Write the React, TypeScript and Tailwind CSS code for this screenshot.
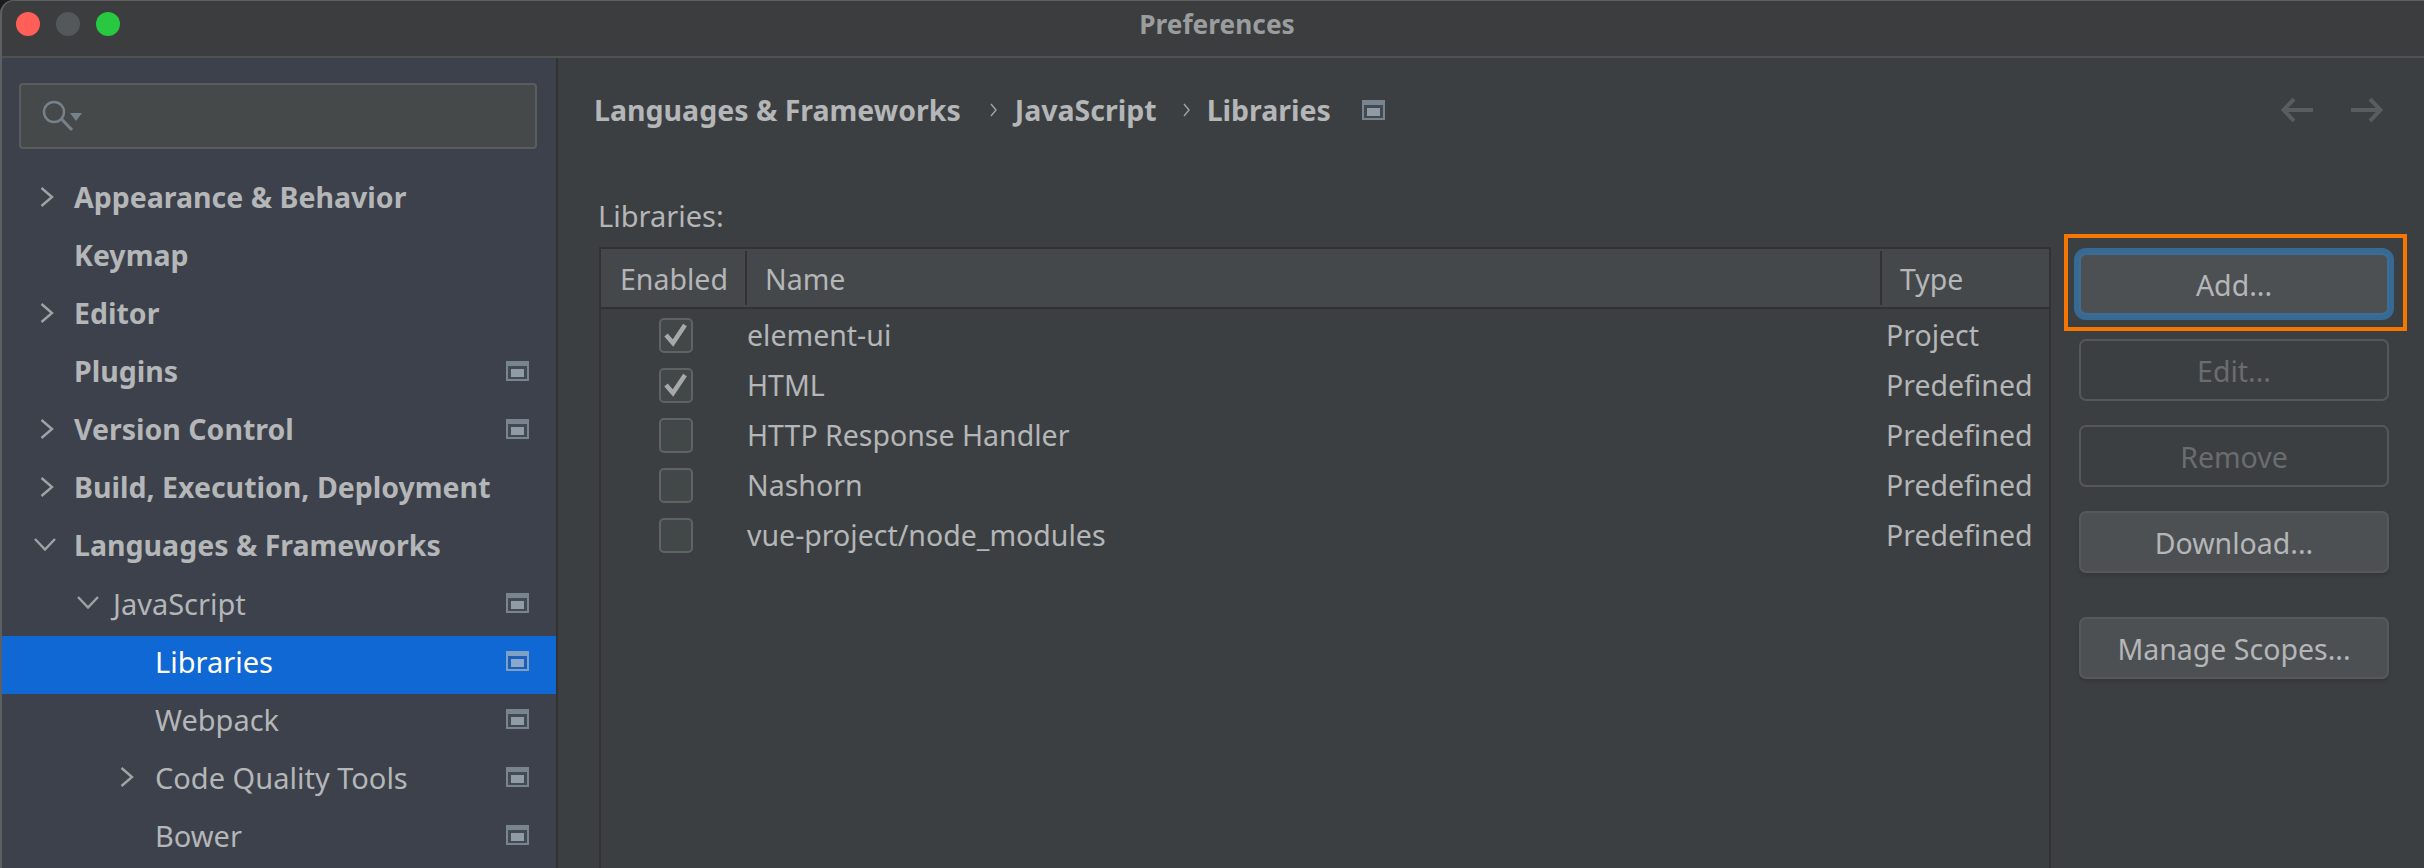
const font = "font-['Noto_Sans','Liberation_Sans',sans-serif]";

interface NavItem {
  label: string;
  indent: "top" | "mid" | "leaf";
  bold?: boolean;
  arrow?: "right" | "down";
  settings?: boolean;
  selected?: boolean;
}

const navItems: NavItem[] = [
  { label: "Appearance & Behavior", indent: "top", bold: true, arrow: "right" },
  { label: "Keymap", indent: "top", bold: true },
  { label: "Editor", indent: "top", bold: true, arrow: "right" },
  { label: "Plugins", indent: "top", bold: true, settings: true },
  { label: "Version Control", indent: "top", bold: true, arrow: "right", settings: true },
  { label: "Build, Execution, Deployment", indent: "top", bold: true, arrow: "right" },
  { label: "Languages & Frameworks", indent: "top", bold: true, arrow: "down" },
  { label: "JavaScript", indent: "mid", arrow: "down", settings: true },
  { label: "Libraries", indent: "leaf", settings: true, selected: true },
  { label: "Webpack", indent: "leaf", settings: true },
  { label: "Code Quality Tools", indent: "leaf", arrow: "right", settings: true },
  { label: "Bower", indent: "leaf", settings: true },
];

const libraries = [
  { name: "element-ui", type: "Project", enabled: true },
  { name: "HTML", type: "Predefined", enabled: true },
  { name: "HTTP Response Handler", type: "Predefined", enabled: false },
  { name: "Nashorn", type: "Predefined", enabled: false },
  { name: "vue-project/node_modules", type: "Predefined", enabled: false },
];

function SettingsIcon({ selected }: { selected?: boolean }) {
  return (
    <svg width="23" height="20" viewBox="0 0 23 20" className="shrink-0">
      <rect x="0" y="0" width="23" height="20" fill={selected ? "#7f9fc4" : "#78848e"} />
      <rect x="2" y="5" width="19" height="13" fill={selected ? "#1a5fb8" : "#434a54"} />
      <rect x="5" y="8" width="13" height="8" fill={selected ? "#8aa8cc" : "#8f9ba5"} />
    </svg>
  );
}

function SideRow({ item }: { item: NavItem }) {
  const padding =
    item.indent === "top" ? "pl-[74px]" : item.indent === "mid" ? "pl-[113px]" : "pl-[155px]";
  const rightPos =
    item.indent === "top" ? "left-[40px]" : item.indent === "mid" ? "left-[80px]" : "left-[120px]";
  const downPos =
    item.indent === "top" ? "left-[34px]" : item.indent === "mid" ? "left-[77px]" : "left-[114px]";
  return (
    <div
      className={`relative flex h-[58px] items-center justify-between pr-[27px] pb-[9px] ${padding} ${
        item.selected ? "bg-[#1068d4] text-white" : "text-[#b4b6b8]"
      }`}
    >
      {item.arrow === "right" && (
        <svg
          width="14"
          height="20"
          viewBox="0 0 14 20"
          fill="none"
          stroke="#a0a3a6"
          strokeWidth="2.4"
          className={`absolute top-[15px] ${rightPos}`}
        >
          <path d="M1.5 1 L12 10 L1.5 19" />
        </svg>
      )}
      {item.arrow === "down" && (
        <svg
          width="22"
          height="13"
          viewBox="0 0 22 13"
          fill="none"
          stroke="#a0a3a6"
          strokeWidth="2.4"
          className={`absolute top-[18px] ${downPos}`}
        >
          <path d="M1 1 L11 11.5 L21 1" />
        </svg>
      )}
      <span className={`pt-[2px] leading-none ${item.bold ? "text-[28.5px] font-bold" : "text-[29px] font-normal"}`}>
        {item.label}
      </span>
      {item.settings && <SettingsIcon selected={item.selected} />}
    </div>
  );
}

function Sidebar() {
  return (
    <aside className="flex w-[558px] shrink-0 flex-col border-r-2 border-[#323232] bg-[#3c414b]">
      <div className="pt-[25px] pr-[19px] pb-[23px] pl-[19px]">
        <div className="flex h-[66px] items-center rounded-[4px] border-2 border-[#5a5c5d] bg-[#454949] pl-[21px]">
          <svg width="40" height="34" viewBox="0 0 40 34" fill="none">
            <circle cx="12" cy="13" r="10" stroke="#76828b" strokeWidth="2.4" />
            <path d="M19.5 20 L30 31" stroke="#76828b" strokeWidth="3" />
            <path d="M28 14 H40 L34 22 Z" fill="#76828b" />
          </svg>
        </div>
      </div>
      {navItems.map((item) => (
        <SideRow key={item.label} item={item} />
      ))}
    </aside>
  );
}

function Checkbox({ checked }: { checked: boolean }) {
  return (
    <div className="flex h-[35px] w-[34px] items-center justify-center rounded-[5px] border-2 border-[#606263] bg-[#424748]">
      {checked && (
        <svg width="24" height="24" viewBox="0 0 24 24" fill="none">
          <path d="M2 12 L9 20 L21 2" stroke="#a7a8a9" strokeWidth="4.5" />
        </svg>
      )}
    </div>
  );
}

function ActionButton({
  label,
  disabled,
  focused,
  className = "",
}: {
  label: string;
  disabled?: boolean;
  focused?: boolean;
  className?: string;
}) {
  return (
    <div
      className={`flex h-[62px] w-[310px] items-center justify-center rounded-[7px] border-2 pt-[2px] text-[28.5px] leading-none ${
        disabled
          ? "border-[#555758] bg-[#3c3f41] text-[#6a6c6e]"
          : focused
            ? "border-[#3f6d92] bg-[#4c5052] text-[#b4b6b8] shadow-[0_0_0_5px_#366a95]"
            : "border-[#56595b] bg-[#4c5052] text-[#b4b6b8] shadow-[0_3px_3px_#363839]"
      } ${className}`}
    >
      {label}
    </div>
  );
}

function LibrariesTable() {
  return (
    <div className="flex-1 border-x-2 border-t-2 border-[#323232]">
      <div className="flex h-[60px] border-b-2 border-[#323232] bg-[#45484a] py-[2px] text-[28.5px] leading-none text-[#b4b6b8]">
        <div className="flex w-[146px] items-center border-r-2 border-[#323232] pt-[2px] pl-[19px]">Enabled</div>
        <div className="flex flex-1 items-center pt-[2px] pl-[18px]">Name</div>
        <div className="flex w-[169px] items-center border-l-2 border-[#323232] pt-[2px] pl-[18px]">Type</div>
      </div>
      <div className="pt-[1px]">
        {libraries.map((lib) => (
          <div key={lib.name} className="flex h-[50px] items-center text-[28.5px] leading-none text-[#b4b6b8]">
            <div className="flex w-[146px] justify-center pl-[4px]">
              <Checkbox checked={lib.enabled} />
            </div>
            <div className="flex-1">{lib.name}</div>
            <div className="w-[163px]">{lib.type}</div>
          </div>
        ))}
      </div>
    </div>
  );
}

function BreadcrumbChevron({ className }: { className: string }) {
  return (
    <svg width="7" height="14" viewBox="0 0 7 14" fill="none" stroke="#a0a3a6" strokeWidth="1.4" className={className}>
      <path d="M1 1 L6 7 L1 13" />
    </svg>
  );
}

function Content() {
  return (
    <main className="flex min-w-0 flex-1 flex-col bg-[#3c3f41] pl-[36px] text-[#b4b6b8]">
      <div className="flex h-[90px] shrink-0 items-center justify-between pt-[14px] pr-[41px]">
        <div className="flex items-center text-[28.5px] font-bold leading-none text-[#b4b6b8]">
          <span>Languages &amp; Frameworks</span>
          <BreadcrumbChevron className="mr-[18px] ml-[29px]" />
          <span>JavaScript</span>
          <BreadcrumbChevron className="mr-[17px] ml-[26px]" />
          <span>Libraries</span>
          <div className="ml-[31px]">
            <SettingsIcon />
          </div>
        </div>
        <div className="flex items-center gap-[38px]">
          <svg width="32" height="24" viewBox="0 0 32 24" fill="none" stroke="#5a5d5e" strokeWidth="4">
            <path d="M32 12 H3 M13 1 L2.5 12 L13 23" />
          </svg>
          <svg width="32" height="24" viewBox="0 0 32 24" fill="none" stroke="#5a5d5e" strokeWidth="4">
            <path d="M0 12 H29 M19 1 L29.5 12 L19 23" />
          </svg>
        </div>
      </div>
      <div className="flex min-h-0 flex-1">
        <div className="flex w-[1457px] shrink-0 flex-col pl-[5px]">
          <div className="-ml-[1px] h-[99px] shrink-0 pt-[54px] text-[29px] leading-[28px]">Libraries:</div>
          <LibrariesTable />
        </div>
        <div className="relative flex flex-col pt-[105px] pl-[28px]">
          <div className="absolute top-[86px] left-[13px] h-[97px] w-[343px] border-4 border-[#f57600]" />
          <ActionButton label="Add..." focused className="mb-[24px]" />
          <ActionButton label="Edit..." disabled className="mb-[24px]" />
          <ActionButton label="Remove" disabled className="mb-[24px]" />
          <ActionButton label="Download..." className="mb-[44px]" />
          <ActionButton label="Manage Scopes..." />
        </div>
      </div>
    </main>
  );
}

export default function App() {
  return (
    <div className={`relative flex h-[868px] w-[2424px] flex-col overflow-hidden bg-[#3c3f41] ${font}`}>
      <header className="relative flex h-[58px] shrink-0 items-center justify-center border-b-2 border-[#4f5152] bg-[#3b3d3f] pb-[8px] pl-[10px]">
        <div className="absolute top-[12px] left-[16px] flex gap-[16px]">
          <div className="h-[24px] w-[24px] rounded-full bg-[#ff5f57]" />
          <div className="h-[24px] w-[24px] rounded-full bg-[#54585b]" />
          <div className="h-[24px] w-[24px] rounded-full bg-[#28c840]" />
        </div>
        <span className="text-[26.3px] font-bold leading-none text-[#9a9c9e]">Preferences</span>
      </header>
      <div className="flex min-h-0 flex-1">
        <Sidebar />
        <Content />
      </div>
      {/* window edge and rounded corner */}
      <div className="pointer-events-none absolute inset-0 rounded-tl-[14px] border-t border-l-2 border-[#5d5f61] shadow-[0_0_0_20px_#1c1c1c]" />
    </div>
  );
}
